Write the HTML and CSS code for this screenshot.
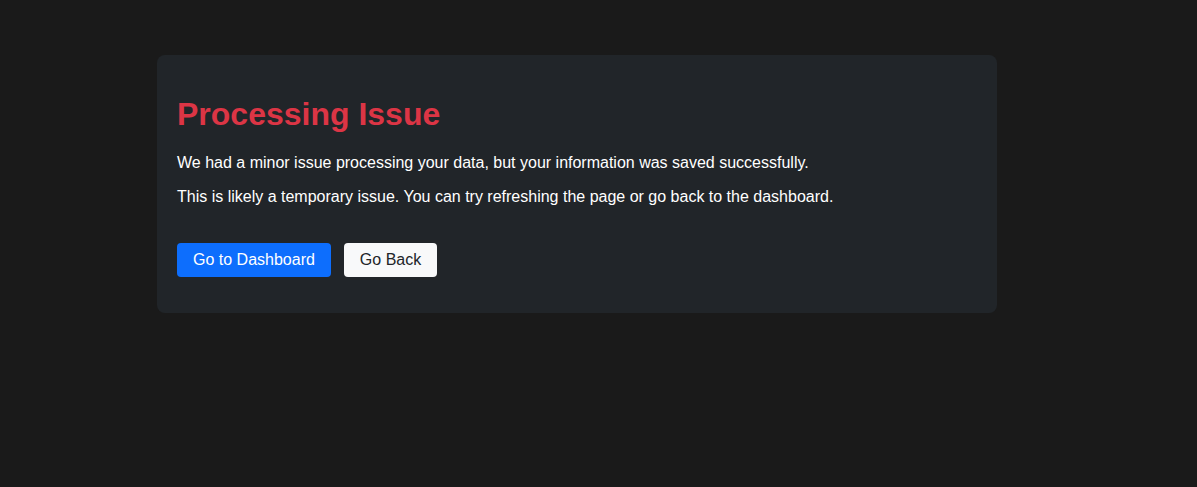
FILE: index.html
```html
<!DOCTYPE html>
<html lang="en">
<head>
<meta charset="utf-8">
<title>Processing Issue</title>
<link rel="stylesheet" href="styles.css">
</head>
<body>
<main class="page">
  <section class="card">
    <h1 class="title">Processing Issue</h1>
    <p class="text">We had a minor issue processing your data, but your information was saved successfully.</p>
    <p class="text">This is likely a temporary issue. You can try refreshing the page or go back to the dashboard.</p>
    <div class="actions">
      <button class="btn btn-primary" type="button">Go to Dashboard</button>
      <button class="btn btn-light" type="button">Go Back</button>
    </div>
  </section>
</main>
</body>
</html>
```

FILE: styles.css
```css
html, body {
  margin: 0;
  padding: 0;
  background: #1a1a1a;
  height: 100%;
}
body {
  font-family: "Liberation Sans", Arial, sans-serif;
  color: #ffffff;
}
.page {
  padding: 55px 0 0 157px;
}
.card {
  box-sizing: border-box;
  width: 840px;
  background: #212529;
  border-radius: 8px;
  padding: 20px;
  display: flow-root;
}
.title {
  margin: 21px 0 21px;
  font-size: 32px;
  font-weight: bold;
  color: #dc3545;
  line-height: normal;
}
.text {
  margin: 16px 0;
  font-size: 16px;
  line-height: normal;
  color: #ffffff;
}
.actions {
  display: flex;
  gap: 13px;
  margin-top: 37px;
  margin-bottom: 16px;
}
.btn {
  font-family: "Liberation Sans", Arial, sans-serif;
  font-size: 16px;
  line-height: normal;
  padding: 8px 16px;
  border: none;
  border-radius: 4px;
  cursor: pointer;
}
.btn-primary {
  background: #0d6efd;
  color: #ffffff;
}
.btn-light {
  background: #f8f9fa;
  color: #212529;
}
```
